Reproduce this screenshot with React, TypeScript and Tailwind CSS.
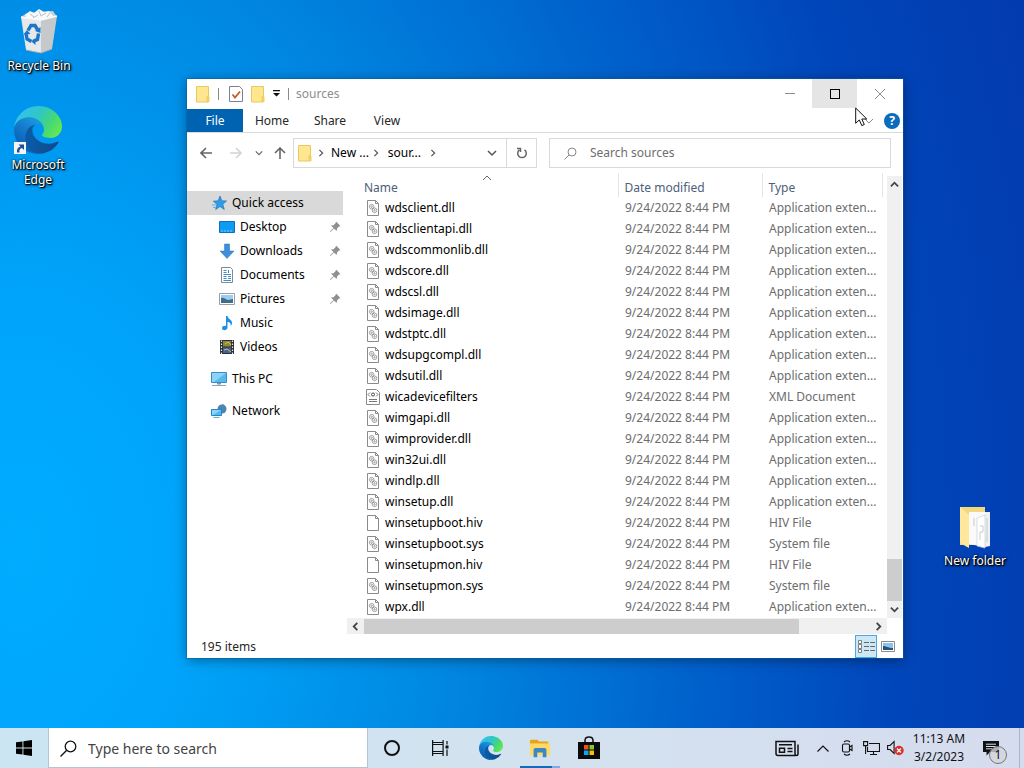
import { useId, useState } from 'react';
import type { ReactNode } from 'react';

type FileKind = 'dll' | 'xml' | 'blank';
type FileRow = { name: string; type: string; kind: FileKind };

const MODIFIED = '9/24/2022 8:44 PM';

const dll = (name: string): FileRow => ({ name: `${name}.dll`, type: 'Application exten...', kind: 'dll' });

const FILES: FileRow[] = [
  dll('wdsclient'),
  dll('wdsclientapi'),
  dll('wdscommonlib'),
  dll('wdscore'),
  dll('wdscsl'),
  dll('wdsimage'),
  dll('wdstptc'),
  dll('wdsupgcompl'),
  dll('wdsutil'),
  { name: 'wicadevicefilters', type: 'XML Document', kind: 'xml' },
  dll('wimgapi'),
  dll('wimprovider'),
  dll('win32ui'),
  dll('windlp'),
  dll('winsetup'),
  { name: 'winsetupboot.hiv', type: 'HIV File', kind: 'blank' },
  { name: 'winsetupboot.sys', type: 'System file', kind: 'dll' },
  { name: 'winsetupmon.hiv', type: 'HIV File', kind: 'blank' },
  { name: 'winsetupmon.sys', type: 'System file', kind: 'dll' },
  dll('wpx'),
];

/* ---------- icons ---------- */

function Chevron({ dir, className = 'size-2.5', weight = 1.5 }: { dir: 'up' | 'down' | 'left' | 'right'; className?: string; weight?: number }) {
  const d = { up: 'M1 7 5 3 9 7', down: 'M1 3 5 7 9 3', left: 'M7 1 3 5 7 9', right: 'M3 1 7 5 3 9' }[dir];
  return (
    <svg viewBox="0 0 10 10" className={`shrink-0 ${className}`} fill="none" stroke="currentColor" strokeWidth={weight}>
      <path d={d} />
    </svg>
  );
}

function EdgeLogo({ className }: { className: string }) {
  const id = useId();
  return (
    <svg viewBox="0 0 256 256" className={className}>
      <defs>
        <linearGradient id={`${id}a`} x1="0.2" y1="0.5" x2="1" y2="0.6">
          <stop offset="0" stopColor="#0c59a4" />
          <stop offset="1" stopColor="#114a8b" />
        </linearGradient>
        <linearGradient id={`${id}b`} x1="0.8" y1="0.1" x2="0.3" y2="0.9">
          <stop offset="0" stopColor="#1b9de2" />
          <stop offset="0.4" stopColor="#1680d0" />
          <stop offset="1" stopColor="#0a5db4" />
        </linearGradient>
        <linearGradient id={`${id}c`} x1="0" y1="0.3" x2="1" y2="0.75">
          <stop offset="0" stopColor="#35c1f1" />
          <stop offset="0.4" stopColor="#2fc6c8" />
          <stop offset="0.7" stopColor="#43d67c" />
          <stop offset="1" stopColor="#66eb4a" />
        </linearGradient>
      </defs>
      <path fill={`url(#${id}b)`} d="M105.73 241.42a79.2 79.2 0 0 1-22.74-21.34 80.72 80.72 0 0 1 29.53-120c3.13-1.47 8.46-4.12 15.54-4a32.35 32.35 0 0 1 25.69 13 31.88 31.88 0 0 1 6.36 18.66c0-.21 24.46-79.6-80-79.6-43.9 0-80 41.66-80 78.21a130.2 130.2 0 0 0 12.11 56 128 128 0 0 0 156.38 67.11 75.56 75.56 0 0 1-62.87-8.04z" />
      <path fill={`url(#${id}a)`} d="M231.07 190.54c-3.38 1.76-6.86 3.31-10.43 4.65-11.34 4.28-23.37 6.46-35.49 6.45-46.76 0-87.49-32.17-87.49-73.44a31 31 0 0 1 16.15-27c-42.29 1.78-53.16 45.84-53.16 71.65 0 73 67.27 80.39 81.77 80.39 7.81 0 19.6-2.27 26.67-4.51l1.3-.44a128.33 128.33 0 0 0 66.6-52.8 4 4 0 0 0-5.92-4.95z" />
      <path fill={`url(#${id}c)`} d="M152.33 148.86c-.81 1.05-3.3 2.5-3.3 5.66 0 2.61 1.7 5.12 4.72 7.23 14.38 10 41.49 8.68 41.56 8.68a59.56 59.56 0 0 0 30.27-8.35 61.38 61.38 0 0 0 30.43-52.88c.26-22.41-8-37.31-11.34-43.91C223.46 23.84 177.72 0 128 0A128 128 0 0 0 0 126.2c.48-36.54 36.8-66.05 80-66.05 3.5 0 23.46.34 42 10.07 16.34 8.58 24.9 18.94 30.85 29.21 6.18 10.67 7.28 24.15 7.28 29.52 0 5.37-2.74 13.33-7.8 19.91z" />
    </svg>
  );
}

function RecycleBinIcon() {
  return (
    <svg viewBox="0 0 48 48" className="size-12">
      <path d="M6 11 12 7 38 5 42 11 36 16 9 16z" fill="#c9d0d4" />
      <path d="M10 9l5-4 4 2 5-4 5 3 5-1 4 5-5 4H13z" fill="#f7f8f9" />
      <path d="M15 8l4 3M24 5l2 5 5-3M32 11l3-4M18 12l5-3" stroke="#b9c0c6" strokeWidth="1" fill="none" />
      <path d="M6 11 26 14 26 47 11 44z" fill="#e6e8ea" />
      <path d="M26 14 42 10 37 43 26 47z" fill="#c6c9cb" />
      <path d="M6 11 26 14 42 10" stroke="#fafafa" strokeWidth="1.4" fill="none" />
      <path d="M11 44 26 47 37 43" stroke="#a9adb0" strokeWidth="1" fill="none" />
      <g fill="none" stroke="#1a75cc" strokeWidth="3.4">
        <path d="M13 24.5l3-5h4l2.5 4" />
        <path d="M11 27l1 6 4.500 2.500" />
        <path d="M23.5 27.5l-1 6-4.500 2" />
      </g>
      <g fill="#1a75cc">
        <path d="M20 25l5.5-4v6z" />
        <path d="M8.5 28.5 12 24l3.5 4z" />
        <path d="M20.5 32v7l-4-3.500z" />
      </g>
    </svg>
  );
}

function FolderIcon({ className = 'w-[14px] h-[18px]' }: { className?: string }) {
  return (
    <svg viewBox="0 0 14 18" className={`shrink-0 ${className}`}>
      <path d="M.5 1.5h12v15.500H.5z" fill="#ffe68f" stroke="#e9c962" />
      <path d="M10.5 11.5l1.500-1 1.500 1.500V17h-3z" fill="#f2cf5e" />
    </svg>
  );
}

function OpenFolderIcon() {
  return (
    <svg viewBox="0 0 34 44" className="h-11 w-[34px]">
      <path d="M2 1h25v38H2z" fill="#f2d77c" />
      <path d="M11 6h16v35l-16-3z" fill="#fafafa" />
      <path d="M27 6h5v34l-5 1z" fill="#eef0f2" />
      <path d="M19 12l8-3v33l-8-2z" fill="#fff" stroke="#c9cdd2" strokeWidth=".7" />
      <path d="M22 20h3v6h-3v8M29 12v24M16 12v8" stroke="#b9bec5" strokeWidth=".8" fill="none" />
      <path d="M2 1 11 9v33L2 37z" fill="#ffe79c" />
    </svg>
  );
}

function FileIcon({ kind }: { kind: FileKind }) {
  return (
    <svg viewBox="0 0 14 16" className="h-4 w-[14px] shrink-0" fill="none" stroke="#8a8a8a">
      {kind === 'xml' ? (
        <>
          <path d="M.5.5h10l3 3v12H.5z" fill="#fff" />
          <path d="M4 3.5 2 5.5l2 2M10 3.5l2 2-2 2" stroke="#666" strokeWidth=".9" />
          <circle cx="7" cy="5.5" r="1.5" stroke="#444" />
          <path d="M3 10.5h8M3 12.5h8" stroke="#777" />
        </>
      ) : (
        <path d="M1.5.5h8l3 3v12h-11zM9.5.5v3h3" fill="#fff" />
      )}
      {kind === 'dll' && (
        <g stroke="#8a8a8a" strokeWidth=".8">
          <circle cx="5.700" cy="6.700" r="2.300" />
          <circle cx="5.700" cy="6.700" r=".7" />
          <circle cx="8.500" cy="10.300" r="2.300" />
          <circle cx="8.500" cy="10.300" r=".7" />
        </g>
      )}
    </svg>
  );
}

function PinIcon() {
  return (
    <svg viewBox="0 0 12 12" className="size-3 text-[#8a9096]">
      <path d="M7 .5 11.5 5l-1.500.5-2 2-.3 2.500L5 7.5 1.5 11 1 10.5 4.500 7 2 4.500l2.500-.3 2-2z" fill="currentColor" />
    </svg>
  );
}

const placeIcons: Record<string, ReactNode> = {
  quick: (
    <>
      <path d="M9 1l1.800 4.800 4.700.2-3.700 3.200 1.500 5.300L9 11.500 4.700 14.500 6 9.300 2.300 6.200l4.900-.4z" fill="#2f9be8" stroke="#1b77c4" strokeWidth=".7" />
      <path d="M1 10h4M2 12.5h3" stroke="#5fb4ee" />
    </>
  ),
  desktop: (
    <>
      <path d="M.5 2.5h15v11H.5z" fill="#0e9bf2" stroke="#0a6fc2" />
      <path d="M2 12h12" stroke="#7fcbf8" strokeDasharray="2 1" />
    </>
  ),
  downloads: <path d="M5.5 1h5v7h4.500L8 15.500 1 8h4.500z" fill="#3d8fdb" stroke="#2a72bb" strokeWidth=".5" />,
  documents: (
    <>
      <path d="M2.5.5h9l2 2v13h-11z" fill="#fff" stroke="#7e8c99" />
      <path d="M4.500 7.500h7.500M4.500 9.500h3M9 9.500h3M4.500 11.500h3M9 11.500h3M4.500 13.500h7.500M4.500 5.500h3M4.500 3.500h3M9.500 3v3" stroke="#3f8fc4" />
    </>
  ),
  pictures: (
    <>
      <path d="M.5 2.5h15v11H.5z" fill="#fff" stroke="#9aa0a6" />
      <path d="M2 4h12v8H2z" fill="#9fcdf0" />
      <path d="M2 7c3-1 5 2 7 2s3-1 5-1v4H2z" fill="#3f6d8c" />
    </>
  ),
  music: <path d="M7 1h1.500c.3 3 5 3.500 4.500 7.500-.2 1.200-.8 2-1.500 2.500.8-3-1.200-4-3-4v5.500c0 3.500-5.500 3.500-5.500.8C3 11 5.500 10.500 7 11z" fill="#1f8fe6" />,
  videos: (
    <>
      <path d="M1 1h14v14H1z" fill="#2c2f36" />
      <path d="M4 2h8v5.500H4z" fill="#8c8a3a" />
      <path d="M4 8.500h8V14H4z" fill="#3f5f9e" />
      <path d="M6 5l3-2 3 3M5 11l3-1 4 3" stroke="#d9c552" />
      <path d="M2.5 1.5v14M13.5 1.5v14" stroke="#e8e8e8" strokeWidth="1.2" strokeDasharray="1.5 1.5" />
    </>
  ),
  pc: (
    <>
      <path d="M.5 1.5h15v10H.5z" fill="#58b9ee" stroke="#3a8dc4" />
      <path d="M1 2h14L3 11H1z" fill="#8bd3f8" />
      <path d="M6 12h4v1.500H6z" fill="#7d97a8" />
      <path d="M1 14.5h14" stroke="#8aa4b4" />
    </>
  ),
  network: (
    <>
      <circle cx="11" cy="6" r="4.5" fill="#5a7f9c" />
      <path d="M8 4l4-3 3 4-2 5z" fill="#4687b5" />
      <path d="M.5 6.5h10v6H.5z" fill="#4fb8f2" stroke="#2b83bf" />
      <path d="M1 7h9l-8 5H1z" fill="#8ad6fb" />
      <path d="M2.5 14.5h6" stroke="#5fb1de" />
    </>
  ),
};

function PlaceIcon({ name }: { name: string }) {
  return <svg viewBox="0 0 16 16" fill="none" className="size-4 shrink-0">{placeIcons[name]}</svg>;
}

function PictureViewIcon() {
  return (
    <svg viewBox="0 0 14 11" className="h-[11px] w-[14px]" fill="none">
      <path d="M.5.5h13v10H.5z" fill="#fff" stroke="#8a8a8a" />
      <path d="M2 2h10v7H2z" fill="#8cc3ee" />
      <path d="M2 5c3 0 5 2 10 2v2H2z" fill="#28527a" />
    </svg>
  );
}

/* ---------- desktop ---------- */

function DesktopIcon({ label, className, children }: { label: string; className: string; children: ReactNode }) {
  return (
    <button type="button" className={`absolute flex w-[76px] flex-col items-center text-center text-xs leading-[15px] text-white [text-shadow:1px_1px_1px_#000,1px_1px_3px_#000,0_0_2px_#000] ${className}`}>
      {children}
      <span>{label}</span>
    </button>
  );
}

/* ---------- explorer window ---------- */

function TitleBar() {
  return (
    <header className="flex h-[30px] shrink-0 items-start pl-[9px]">
      <div className="flex h-[29px] flex-1 items-center">
        <FolderIcon />
        <span className="ml-2 h-3 w-px bg-[#8c8c8c]" />
        <button type="button" aria-label="Properties" className="ml-2.5">
          <svg viewBox="0 0 14 16" className="h-4 w-[14px]" fill="none">
            <path d="M.5.5h10l3 3v12H.5z" fill="#fff" stroke="#7b7f86" />
            <path d="M3.5 8.5l2.500 3 5-6" stroke="#c8592b" strokeWidth="1.8" />
          </svg>
        </button>
        <button type="button" aria-label="New folder" className="ml-2"><FolderIcon /></button>
        <button type="button" aria-label="Customize Quick Access Toolbar" className="ml-2">
          <svg viewBox="0 0 7 7" className="size-[7px]"><path d="M0 0h7v1.200H0zM0 3h7L3.5 6.500z" fill="#111" /></svg>
        </button>
        <span className="ml-2 h-3 w-px bg-[#8c8c8c]" />
        <h1 className="ml-[7px] text-xs text-[#8c8c8c]">sources</h1>
      </div>
      <div className="flex pr-px text-[#8c8c8c]">
        <button type="button" aria-label="Minimize" className="flex h-[29px] w-[45px] items-center justify-center">
          <span className="h-px w-2.5 bg-[#8c8c8c]" />
        </button>
        <button type="button" aria-label="Maximize" className="flex h-[29px] w-[45px] items-center justify-center bg-[#e5e5e5]">
          <span className="size-2.5 border border-black" />
        </button>
        <button type="button" aria-label="Close" className="flex h-[29px] w-[45px] items-center justify-center">
          <svg viewBox="0 0 10 10" className="size-2.5" stroke="currentColor"><path d="M0 0l10 10M10 0 0 10" /></svg>
        </button>
      </div>
    </header>
  );
}

function Ribbon() {
  return (
    <div className="flex h-6 shrink-0 items-stretch border-b border-[#dadbdc] text-xs text-[#262626]">
      <button type="button" className="w-14 bg-[#0063b1] text-white">File</button>
      <button type="button" className="w-[58px]">Home</button>
      <button type="button" className="w-[58px]">Share</button>
      <button type="button" className="w-14">View</button>
      <div className="ml-auto flex items-center gap-2.5 pr-[3px]">
        <button type="button" aria-label="Expand the Ribbon"><Chevron dir="down" weight={1} className="size-2.5 text-[#8a8a8a]" /></button>
        <button type="button" aria-label="Help" className="flex size-4 items-center justify-center rounded-full bg-[#0b6cbd] text-xs font-bold text-white">?</button>
      </div>
    </div>
  );
}

function Arrow({ d }: { d: string }) {
  return <svg viewBox="0 0 12 12" className="size-3" fill="none" stroke="currentColor" strokeWidth="1.6"><path d={d} /></svg>;
}

function NavBar() {
  const [query, setQuery] = useState('');

  return (
    <nav className="flex shrink-0 items-center py-[5px] pr-3 pl-[7px] text-xs text-[#666]">
      <button type="button" aria-label="Back" className="flex w-6 justify-center"><Arrow d="M12 6H1M6 1 1 6l5 5" /></button>
      <button type="button" aria-label="Forward" className="ml-1.5 flex w-6 justify-center text-[#d4d4d4]"><Arrow d="M0 6h11M6 1l5 5-5 5" /></button>
      <button type="button" aria-label="Recent locations" className="ml-[5px] flex w-3 justify-center"><Chevron dir="down" className="size-2" /></button>
      <button type="button" aria-label="Up" className="ml-[3px] flex w-6 justify-center"><Arrow d="M6 12V1M1 6l5-5 5 5" /></button>
      <div className="ml-px flex h-[30px] w-[244px] border border-[#d9d9d9]">
        <div className="flex flex-1 items-center pl-1 text-black">
          <FolderIcon />
          <Chevron dir="right" className="ml-[5px] size-2 text-[#555]" />
          <button type="button" className="ml-1.5">New ...</button>
          <Chevron dir="right" className="ml-[3px] size-2 text-[#555]" />
          <button type="button" className="ml-2">sour...</button>
          <Chevron dir="right" className="ml-2 size-2 text-[#555]" />
          <button type="button" aria-label="Previous locations" className="mr-[9px] ml-auto text-[#555]"><Chevron dir="down" /></button>
        </div>
        <button type="button" aria-label="Refresh" className="flex w-[30px] items-center justify-center border-l border-[#d9d9d9]">
          <svg viewBox="0 0 12 12" className="size-3" fill="none" stroke="#666" strokeWidth="1.5">
            <path d="M8.5 2.8A4.300 4.300 0 1 1 3.5 2.8" />
            <path d="M1 1.5h3.500V5" />
          </svg>
        </button>
      </div>
      <label className="ml-3 flex h-[30px] flex-1 items-center border border-[#d9d9d9] pl-3.5">
        <svg viewBox="0 0 13 13" className="size-[13px]" fill="none" stroke="#888">
          <circle cx="8" cy="5" r="4" />
          <path d="M5 8 .5 12.5" />
        </svg>
        <input aria-label="Search sources" placeholder="Search sources" value={query} onChange={(e) => setQuery(e.target.value)} className="ml-[13px] min-w-0 flex-1 text-xs outline-none placeholder:text-[#6d6d6d]" />
      </label>
    </nav>
  );
}

function Place({ icon, label, pinned, root, active }: { icon: string; label: string; pinned?: boolean; root?: boolean; active?: boolean }) {
  return (
    <button type="button" className={`flex h-6 w-full items-center gap-[5px] text-left ${root ? 'pl-6' : 'pl-8'} ${active ? 'bg-[#d9d9d9]' : ''}`}>
      <PlaceIcon name={icon} />
      <span className="flex-1">{label}</span>
      {pinned && <span className="pr-0.5"><PinIcon /></span>}
    </button>
  );
}

function SidePane() {
  return (
    <aside className="w-[156px] shrink-0 pt-[18px] text-xs text-black">
      <Place icon="quick" label="Quick access" root active />
      <Place icon="desktop" label="Desktop" pinned />
      <Place icon="downloads" label="Downloads" pinned />
      <Place icon="documents" label="Documents" pinned />
      <Place icon="pictures" label="Pictures" pinned />
      <Place icon="music" label="Music" />
      <Place icon="videos" label="Videos" />
      <div className="mt-2"><Place icon="pc" label="This PC" root /></div>
      <div className="mt-2"><Place icon="network" label="Network" root /></div>
    </aside>
  );
}

function FileTable() {
  return (
    <table className="w-full table-fixed text-left text-xs">
      <colgroup>
        <col />
        <col className="w-36" />
        <col className="w-[120px]" />
        <col className="w-[5px]" />
      </colgroup>
      <thead>
        <tr className="h-6 text-[#4c607a]">
          <th className="relative pt-1.5 pl-[17px] font-normal">
            Name
            <Chevron dir="up" weight={1} className="absolute top-0 left-1/2 size-2.5 text-[#666]" />
          </th>
          <th className="border-l border-[#e5e5e5] pt-1.5 pl-1.5 font-normal">Date modified</th>
          <th className="border-l border-[#e5e5e5] pt-1.5 pl-1.5 font-normal">Type</th>
          <th className="border-l border-[#e5e5e5]" />
        </tr>
      </thead>
      <tbody className="text-[#6d6d6d]">
        {FILES.map((f) => (
          <tr key={f.name} className="h-[21px]">
            <td className="pl-[19px]">
              <div className="flex items-center gap-[5px] text-black">
                <FileIcon kind={f.kind} />
                {f.name}
              </div>
            </td>
            <td className="pl-[7px]">{MODIFIED}</td>
            <td className="pl-[7px] whitespace-nowrap">{f.type}</td>
            <td />
          </tr>
        ))}
      </tbody>
    </table>
  );
}

function FilePane() {
  return (
    <main className="flex min-w-0 flex-1 flex-col pl-1">
      <div className="flex min-h-0 flex-1">
        <div className="min-w-0 flex-1 overflow-hidden"><FileTable /></div>
        <div className="mt-[3px] mr-px flex w-[15px] flex-col items-center bg-[#f0f0f0] text-[#444]">
          <button type="button" aria-label="Scroll up" className="flex h-4 items-center"><Chevron dir="up" weight={2} className="size-[9px]" /></button>
          <div className="flex-1" />
          <div className="h-[42px] w-full bg-[#cdcdcd]" />
          <button type="button" aria-label="Scroll down" className="flex h-[17px] items-center"><Chevron dir="down" weight={2} className="size-[9px]" /></button>
        </div>
      </div>
      <div className="mr-4 flex h-4 shrink-0 items-center bg-[#f0f0f0] text-[#444]">
        <button type="button" aria-label="Scroll left" className="flex w-[17px] justify-center"><Chevron dir="left" weight={2} className="size-[9px]" /></button>
        <div className="flex h-[15px] flex-1"><div className="w-[86%] bg-[#cdcdcd]" /></div>
        <button type="button" aria-label="Scroll right" className="flex w-[17px] justify-center"><Chevron dir="right" weight={2} className="size-[9px]" /></button>
      </div>
    </main>
  );
}

function ExplorerWindow() {
  return (
    <section className="absolute top-[79px] right-[121px] bottom-[70px] left-[187px] flex flex-col bg-white shadow-[0_0_0_1px_#0a5aa880,0_2px_12px_#00000066]">
      <TitleBar />
      <Ribbon />
      <NavBar />
      <div className="flex min-h-0 flex-1">
        <SidePane />
        <FilePane />
      </div>
      <footer className="flex h-6 shrink-0 items-center pl-3.5 text-xs text-[#262626]">
        <span className="flex-1 pt-0.5">195 items</span>
        <button type="button" aria-label="Details view" className="flex h-[23px] w-[22px] items-center justify-center border border-[#4fa8d8] bg-[#cce8f6]">
          <svg viewBox="0 0 17 13" className="h-[13px] w-[17px]" fill="none" stroke="#666">
            <path d="M.5.5h3v3h-3zM.5 4.500h3v4h-3zM.5 9.500h3v3h-3z" fill="#fff" strokeWidth=".8" />
            <path d="M6 2.5h11M6 6.5h11M6 10.5h11" strokeDasharray="5 1.2" />
          </svg>
        </button>
        <button type="button" aria-label="Large icons view" className="flex w-[26px] items-center justify-center pr-1"><PictureViewIcon /></button>
      </footer>
    </section>
  );
}

/* ---------- taskbar ---------- */

function TaskButton({ label, className = '', children }: { label: string; className?: string; children: ReactNode }) {
  return <button type="button" aria-label={label} className={`flex h-10 shrink-0 items-center justify-center ${className}`}>{children}</button>;
}

function Taskbar() {
  const [query, setQuery] = useState('');

  return (
    <footer className="flex h-10 shrink-0 items-stretch bg-linear-to-r from-[#cbe5f3] via-[#d3e2ef] to-[#d5dcee] text-[#111]">
      <TaskButton label="Start" className="w-12">
        <svg viewBox="0 0 16 16" className="size-4"><path d="M0 2.300 6.500 1.400V7.600H0zM7.400 1.200 16 0v7.600H7.400zM0 8.400h6.500v6.200L0 13.700zM7.400 8.400H16V16l-8.600-1.200z" /></svg>
      </TaskButton>
      <label className="flex w-80 items-center border border-t-0 border-[#b4c4d0] bg-white pt-0.5 pl-[11px]">
        <svg viewBox="0 0 17 17" className="size-[17px]" fill="none" stroke="#111" strokeWidth="1.3">
          <circle cx="10.5" cy="6.5" r="5.3" />
          <path d="M6.700 10.300.5 16.500" />
        </svg>
        <input aria-label="Type here to search" placeholder="Type here to search" value={query} onChange={(e) => setQuery(e.target.value)} className="ml-[11px] min-w-0 flex-1 text-sm outline-none placeholder:text-[#444]" />
      </label>
      <TaskButton label="Cortana" className="w-12">
        <span className="size-4 rounded-full border-2 border-[#111]" />
      </TaskButton>
      <TaskButton label="Task View" className="w-12">
        <svg viewBox="0 0 17 16" className="h-4 w-[17px]" fill="none" stroke="#111" strokeWidth="1.2">
          <path d="M.6 0v2.500h10.500V0M.6 16v-2.500h10.500V16M.6 2.500v11M11.100 2.500v11M.6 4.500h10.500M.6 11.500h10.500M15 1v3.500M15 9.500V16" />
          <path d="M13.5 5.500h3v3h-3z" fill="#111" stroke="none" />
        </svg>
      </TaskButton>
      <TaskButton label="Microsoft Edge" className="w-[54px]"><EdgeLogo className="size-6" /></TaskButton>
      <TaskButton label="File Explorer" className="relative w-11">
        <svg viewBox="0 0 24 20" className="h-5 w-[22px]">
          <path d="M1 2 2 1h7l2 2h10v4H1z" fill="#e8a317" />
          <path d="M1 5h22v13H1z" fill="#ffd866" />
          <path d="M5 20v-8a2 2 0 0 1 2-2h10a2 2 0 0 1 2 2v8h-4v-5H9v5z" fill="#3b87c4" />
        </svg>
        <span className="absolute inset-x-0.5 bottom-0 flex h-0.5"><span className="flex-1 bg-[#0f6cc4]" /><span className="w-2 bg-[#7fa9e6]" /></span>
      </TaskButton>
      <TaskButton label="Microsoft Store" className="w-[54px]">
        <svg viewBox="0 0 24 24" className="size-6">
          <path d="M8 7V4.500C8 1 11 1 12 1s4 0 4 3.500V7" fill="none" stroke="#111" strokeWidth="1.5" />
          <path d="M1 6h22v17H1z" fill="#0b0b0b" />
          <path d="M7 9h4.500v4.500H7z" fill="#f1511b" />
          <path d="M12.5 9H17v4.500h-4.500z" fill="#80cc28" />
          <path d="M7 14.500h4.500V19H7z" fill="#00adef" />
          <path d="M12.5 14.500H17V19h-4.500z" fill="#fbbc09" />
        </svg>
      </TaskButton>

      <div className="ml-auto flex items-stretch">
        <TaskButton label="News and interests" className="w-12">
          <svg viewBox="0 0 24 17" className="h-[17px] w-6" fill="none" stroke="#111" strokeWidth="1.5">
            <path d="M20.5 15.500H3a2 2 0 0 1-2-2V1.500h19v12.500a1.500 1.500 0 0 0 3 0V4.500" />
            <path d="M4 4.700h13M12.500 8.500h5M12.500 11.500h5M4.500 8.200h5v4h-5z" />
          </svg>
        </TaskButton>
        <TaskButton label="Show hidden icons" className="w-6">
          <svg viewBox="0 0 12 7" className="h-[7px] w-3" fill="none" stroke="#111" strokeWidth="1.2"><path d="M.5 6.500 6 1l5.500 5.500" /></svg>
        </TaskButton>
        <TaskButton label="Meet Now" className="w-6">
          <svg viewBox="0 0 14 16" className="h-4 w-[14px]" fill="none" stroke="#111" strokeWidth="1.1">
            <path d="M4 2C6 .3 8 .3 10 2M4 14c2 1.700 4 1.700 6 0" />
            <rect x="2.5" y="4" width="7" height="8" rx="1.5" />
            <path d="M9.5 7 12 5.500v5L9.500 9z" />
          </svg>
        </TaskButton>
        <TaskButton label="Network" className="w-6">
          <svg viewBox="0 0 17 14" className="h-[14px] w-[17px]" fill="none" stroke="#111" strokeWidth="1.1">
            <path d="M6 2.500h10.500v8H4.500V6M10.500 10.500V13M7 13.500h7" />
            <path d="M.6.6h4v4h-4zM2.600 4.500v8.500" />
          </svg>
        </TaskButton>
        <TaskButton label="Volume" className="w-6">
          <svg viewBox="0 0 17 16" className="h-4 w-[17px]" fill="none">
            <path d="M.6 5.500h2.500l4-4v12l-4-4H.6z" stroke="#111" strokeWidth="1.1" />
            <circle cx="12" cy="10.5" r="4.7" fill="#d8302c" />
            <path d="M10 8.500l4 4M14 8.500l-4 4" stroke="#fff" strokeWidth="1.3" />
          </svg>
        </TaskButton>
        <button type="button" className="w-16 text-center text-xs leading-[18px]">
          <time>11:13 AM<br />3/2/2023</time>
        </button>
        <TaskButton label="Notifications" className="relative w-12 pr-2">
          <svg viewBox="0 0 16 15" className="h-[15px] w-4">
            <path d="M0 0h16v11H7l-3.500 3.500V11H0z" fill="#111" />
            <path d="M3 3.200h10M3 5.500h10M3 7.800h6" stroke="#d5dcee" />
          </svg>
          <span className="absolute right-3 bottom-1 flex size-[18px] items-center justify-center rounded-full border border-[#777] bg-[#d3d6dc]/80 text-xs text-[#111]">1</span>
        </TaskButton>
        <button type="button" aria-label="Show desktop" className="w-[5px] border-l border-[#a9b6c8]" />
      </div>
    </footer>
  );
}

function Cursor() {
  return (
    <svg viewBox="0 0 13 20" className="pointer-events-none absolute top-[107px] right-[156px] h-5 w-[13px]">
      <path d="M.7 1v15.300l3.600-3.400 2.500 5.700 2.500-1.100-2.500-5.500h5z" fill="#fff" stroke="#111" />
    </svg>
  );
}

export default function App() {
  return (
    <div className="flex h-screen flex-col overflow-hidden font-['Noto_Sans','Open_Sans',sans-serif]">
      <div className="relative min-h-0 flex-1 bg-[radial-gradient(110%_220%_at_2%_75%,#00acff_0%,#00a4fa_16%,#0088e2_38%,#0062cc_60%,#0046ba_78%,#0338ac_100%)]">
        <DesktopIcon label="Recycle Bin" className="top-[6px] left-px gap-1"><RecycleBinIcon /></DesktopIcon>
        <DesktopIcon label="Microsoft Edge" className="top-[106px] left-0 gap-[3px] px-2">
          <span className="relative">
            <EdgeLogo className="size-12" />
            <svg viewBox="0 0 12 12" className="absolute bottom-0 left-0 size-3">
              <path d="M0 0h12v12H0z" fill="#f4f4f4" />
              <path d="M3 10.500C2.500 7 4 5 6.500 4.500L4.500 2.500H10V8L8 6C6 6.500 5 8 5.500 10.500z" fill="#1c4f93" />
            </svg>
          </span>
        </DesktopIcon>
        <DesktopIcon label="New folder" className="top-[506px] right-[11px] gap-[3px]"><OpenFolderIcon /></DesktopIcon>
        <ExplorerWindow />
        <Cursor />
      </div>
      <Taskbar />
    </div>
  );
}
